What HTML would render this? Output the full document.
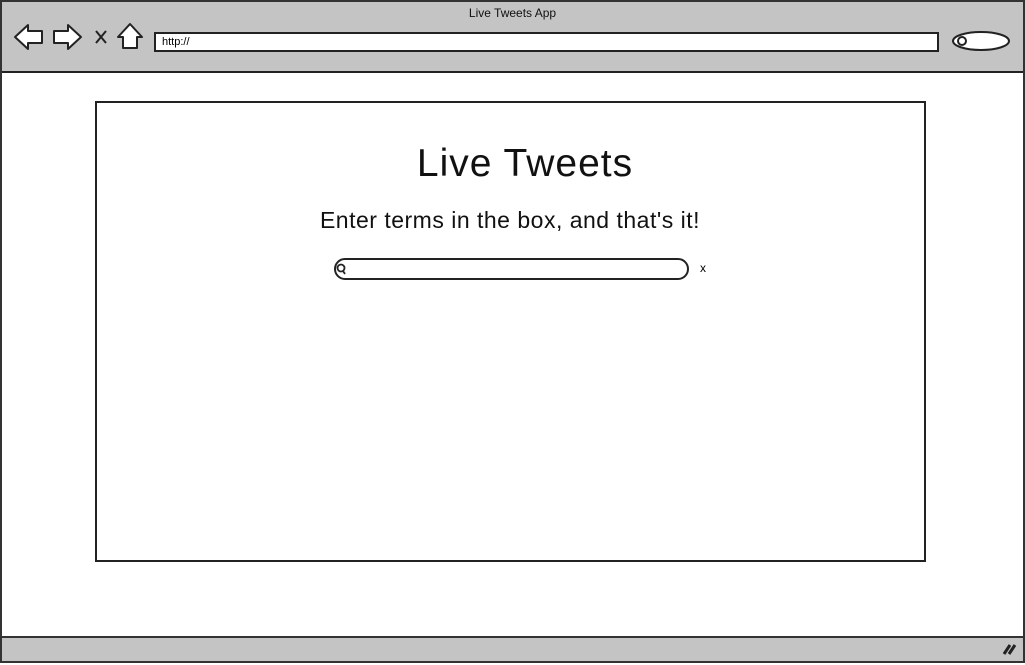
<!DOCTYPE html>
<html><head><style>
body{margin:0;width:1025px;height:665px;background:#fff;position:relative;overflow:hidden;font-family:"Liberation Sans",sans-serif}
.a{position:absolute}
</style></head><body>
<div class="a" style="left:0;top:0;width:1021px;height:69px;background:#c4c4c4;border:2px solid #333;border-bottom:2px solid #222"></div>
<div class="a" style="left:0;top:71px;width:1021px;height:565px;border-left:2px solid #333;border-right:2px solid #333"></div>
<div class="a" style="left:0;top:636px;width:1021px;height:23px;background:#c4c4c4;border:2px solid #333"></div>
<div class="a" style="left:0;top:6px;width:1025px;text-align:center;font-size:12px;color:#111">Live Tweets App</div>
<svg class="a" style="left:0;top:0" width="1025" height="665">
<g fill="#fff" stroke="#222" stroke-width="2" stroke-linejoin="round">
<path d="M15 37 L28 25 L28 31 L42 31 L42 43 L28 43 L28 49 Z"/>
<path d="M81 37 L68 25 L68 31 L54 31 L54 43 L68 43 L68 49 Z"/>
<path d="M118 37 L130 24 L142 37 L137 37 L137 48 L123 48 L123 37 Z"/>
<ellipse cx="981" cy="41" rx="28" ry="9"/>
</g>
<path d="M96 31 L106 43 M106 31 L96 43" stroke="#222" stroke-width="2"/>
<circle cx="962" cy="41" r="4" fill="none" stroke="#222" stroke-width="2"/>
<path d="M1004 654 L1010 645 M1009 654 L1015 645" stroke="#222" stroke-width="3"/>
</svg>
<div class="a" style="left:154px;top:32px;width:775px;height:16px;background:#fff;border:2px solid #222;font-size:11px;line-height:16px;padding-left:6px;box-sizing:content-box">http://</div>
<div class="a" style="left:95px;top:101px;width:827px;height:457px;border:2px solid #222"></div>
<div class="a" style="left:108px;top:142px;width:834px;text-align:center;font-size:39px;letter-spacing:1px;color:#111">Live Tweets</div>
<div class="a" style="left:93px;top:207px;width:834px;text-align:center;font-size:23px;letter-spacing:0.5px;color:#111">Enter terms in the box, and that's it!</div>
<div class="a" style="left:334px;top:258px;width:351px;height:18px;border:2px solid #222;border-radius:11px"></div>
<svg class="a" style="left:334px;top:260px" width="16" height="18"><circle cx="7" cy="8" r="3.5" fill="none" stroke="#222" stroke-width="1.8"/><path d="M9 11 L11 14" stroke="#222" stroke-width="1.8"/></svg>
<div class="a" style="left:700px;top:261px;font-size:12px">x</div>
</body></html>
